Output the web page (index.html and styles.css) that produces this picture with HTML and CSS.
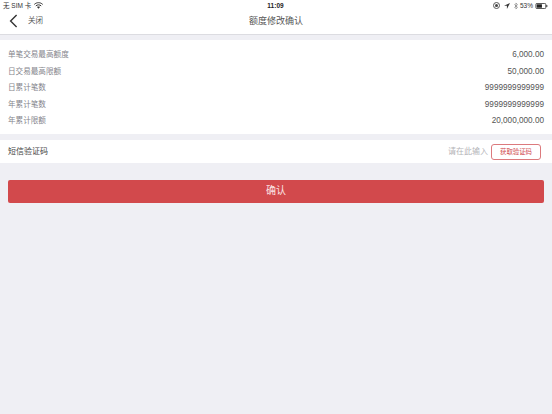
FILE: index.html
```html
<!DOCTYPE html>
<html lang="zh">
<head>
<meta charset="utf-8">
<title>额度修改确认</title>
<link rel="stylesheet" href="styles.css">
</head>
<body>
<header class="top">
  <div class="status">
    <div class="status-left"><span>无 SIM 卡</span>
      <svg class="wifi" width="9" height="7" viewBox="0 0 9 7"><path d="M.3 2.400C2.700.1 6.300.1 8.700 2.400M1.800 3.900c1.600-1.400 3.800-1.400 5.400 0" fill="none" stroke="#333" stroke-width="1"/><path d="M3 5l1.500 1.800L6 5c-.9-.6-2.100-.6-3 0z" fill="#333"/></svg>
    </div>
    <div class="status-time">11:09</div>
    <div class="status-right">
      <svg width="7" height="7" viewBox="0 0 7 7"><circle cx="3.500" cy="3.500" r="3" fill="none" stroke="#555" stroke-width="1"/><circle cx="3.500" cy="3.500" r="1.500" fill="#444"/></svg>
      <svg class="gap-wide" width="6" height="6" viewBox="0 0 7 7"><path d="M7 0L0 3.200h3.400V7z" fill="#333"/></svg>
      <svg class="gap-wide" width="4" height="8" viewBox="0 0 5 9"><path d="M.4 2.400l4 3.800-2 2V.8l2 2-4 3.800" fill="none" stroke="#666" stroke-width=".7"/></svg>
      <span>53%</span>
      <svg width="13" height="6" viewBox="0 0 14 7"><rect x=".5" y=".5" width="11.500" height="6" rx="1.200" fill="none" stroke="#333"/><rect x="1.500" y="1.500" width="6" height="4" fill="#222"/><rect x="12.600" y="2.300" width="1.200" height="2.400" fill="#333"/></svg>
    </div>
  </div>
  <div class="nav">
    <div class="nav-left">
      <svg width="9" height="14" viewBox="0 0 9 14"><path d="M7.600 1L1.600 7l6 6" fill="none" stroke="#333" stroke-width="1.400"/></svg>
      <span>关闭</span>
    </div>
    <div class="nav-title">额度修改确认</div>
    <div></div>
  </div>
</header>
<section class="card limits">
  <div class="row"><span>单笔交易最高额度</span><span class="val">6,000.00</span></div>
  <div class="row"><span>日交易最高限额</span><span class="val">50,000.00</span></div>
  <div class="row"><span>日累计笔数</span><span class="val">9999999999999</span></div>
  <div class="row"><span>年累计笔数</span><span class="val">9999999999999</span></div>
  <div class="row"><span>年累计限额</span><span class="val">20,000,000.00</span></div>
</section>
<section class="card sms">
  <span class="sms-label">短信验证码</span>
  <div class="sms-right">
    <span class="hint">请在此输入</span>
    <button class="code-btn" type="button">获取验证码</button>
  </div>
</section>
<div class="action"><button class="confirm" type="button">确认</button></div>
</body>
</html>
```
FILE: styles.css
```css
* { box-sizing: border-box; }
html, body { margin: 0; height: 100%; }
body {
  background: #efeff4;
  font-family: "Liberation Sans", "Noto Sans CJK SC", sans-serif;
  color: #555;
  overflow: hidden;
}
.top {
  background: #fff;
  height: 35px;
  border-bottom: 1px solid #dcdce1;
}
.status {
  height: 11px;
  padding: 0 4px 0 3px;
  display: grid;
  grid-template-columns: 1fr auto 1fr;
  align-items: center;
  font-size: 6.5px;
  line-height: 10px;
  color: #333;
}
.status-left { display: flex; align-items: center; gap: 3px; }
.status-time { font-weight: 700; font-size: 6.5px; color: #222; }
.status-right { display: flex; align-items: center; justify-content: flex-end; gap: 2px; }
.gap-wide { margin-left: 2px; }
.nav {
  height: 19px;
  display: grid;
  grid-template-columns: 1fr auto 1fr;
  align-items: center;
  padding: 0 9px;
}
.nav-left { display: flex; align-items: center; gap: 10px; font-size: 7.5px; line-height: 10px; color: #555; }
.nav-title { font-size: 9px; line-height: 12px; color: #555; }
.card { background: #fff; }
.limits { margin-top: 5px; padding: 7px 8px 4px; height: 94px; }
.row {
  height: 16.5px;
  display: flex;
  justify-content: space-between;
  align-items: center;
  font-size: 7.6px;
  line-height: 10px;
  color: #85858c;
}
.val { color: #555; font-size: 8.2px; }
.sms {
  margin-top: 6px;
  height: 23px;
  padding: 0 11px 0 8px;
  display: flex;
  justify-content: space-between;
  align-items: center;
}
.sms-label { font-size: 8px; line-height: 10px; color: #444; }
.sms-right { display: flex; align-items: center; gap: 3px; }
.hint { font-size: 8px; line-height: 10px; color: #b4b4b8; }
.code-btn {
  width: 50px;
  height: 16px;
  padding: 0;
  background: #fff;
  border: 1px solid #dc7a7d;
  border-radius: 3px;
  color: #cf4a4e;
  font: 6.4px/10px "Liberation Sans", "Noto Sans CJK SC", sans-serif;
}
.action { padding: 17px 8px 0; }
.confirm {
  display: block;
  width: 100%;
  height: 23px;
  padding: 0 0 1px;
  background: #d2494c;
  border: 0;
  border-radius: 2px;
  color: #fbe4e4;
  font: 10px/12px "Liberation Sans", "Noto Sans CJK SC", sans-serif;
}
```
